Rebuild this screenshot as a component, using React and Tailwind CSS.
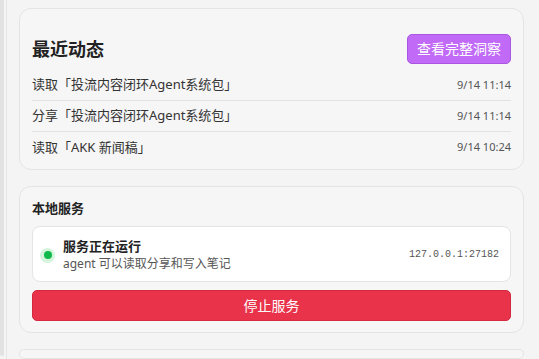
export default function App() {
  const rows = [
    { t: "读取「投流内容闭环Agent系统包」", d: "9/14 11:14" },
    { t: "分享「投流内容闭环Agent系统包」", d: "9/14 11:14" },
    { t: "读取「AKK 新闻稿」", d: "9/14 10:24" },
  ];
  const font = { fontFamily: '"Noto Sans", "Noto Sans CJK SC", sans-serif' };
  return (
    <div className="w-[539px] h-[359px] overflow-hidden bg-[#f4f4f4] flex text-[#222]" style={font}>
      <div className="w-[4px] h-[356px] bg-[#e2e2e2] rounded-b-[2px] shrink-0" />
      <div className="w-[2px] shrink-0" />
      <div className="w-px bg-[#e6e6e6] shrink-0" />
      <div className="flex-1 pl-[12px] pr-[15px] pt-[8px] flex flex-col gap-[16px]">
        <div className="rounded-[12px] border border-[#e4e4e4] bg-[#f6f6f6] px-[12px] pt-[25px] pb-[6px] flex flex-col">
          <div className="flex items-center justify-between h-[30px]">
            <div className="text-[18px] font-bold leading-none">最近动态</div>
            <button className="h-[30px] px-[9px] rounded-[5px] bg-[#c06af7] border border-[#a957e0] text-white text-[14px] leading-none">
              查看完整洞察
            </button>
          </div>
          <div className="mt-[6px] flex flex-col">
            {rows.map((r, i) => (
              <div
                key={i}
                className={`flex items-center justify-between h-[31px] ${i < rows.length - 1 ? "border-b border-[#e2e2e2]" : ""}`}
              >
                <span className="text-[13px] text-[#333]">{r.t}</span>
                <span className="text-[11px] text-[#555]">{r.d}</span>
              </div>
            ))}
          </div>
        </div>
        <div className="rounded-[12px] border border-[#e4e4e4] bg-[#f6f6f6] px-[12px] pt-[11px] pb-[11px] flex flex-col">
          <div className="text-[13px] font-bold leading-[20px]">本地服务</div>
          <div className="mt-[8px] h-[56px] rounded-[8px] border border-[#e4e4e4] bg-white flex items-center pl-[7px] pr-[11px]">
            <div className="w-[15px] h-[15px] rounded-full bg-[#d4f5dc] flex items-center justify-center mt-[2px]">
              <div className="w-[8px] h-[8px] rounded-full bg-[#10b94a]" />
            </div>
            <div className="ml-[8px] flex flex-col">
              <div className="text-[13px] font-bold leading-[18px] text-[#222]">服务正在运行</div>
              <div className="text-[12px] leading-[17px] text-[#555]">agent 可以读取分享和写入笔记</div>
            </div>
            <div className="ml-auto text-[10px] text-[#555]" style={{ fontFamily: '"Liberation Mono", "Noto Sans CJK SC", monospace' }}>
              127.0.0.1:27182
            </div>
          </div>
          <button className="mt-[8px] h-[31px] rounded-[5px] bg-[#e8334a] border border-[#d42a40] text-white text-[14px]">
            停止服务
          </button>
        </div>
        <div className="rounded-[12px] border border-[#e4e4e4] bg-[#f6f6f6] h-[100px]" />
      </div>
    </div>
  );
}
